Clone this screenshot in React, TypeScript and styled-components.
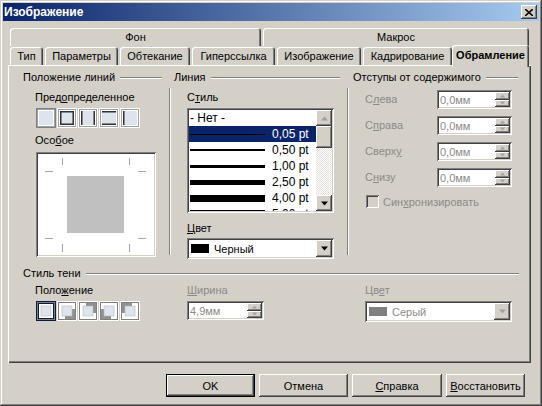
import React, { FC } from "react";
import styled, { createGlobalStyle, css } from "styled-components";

const GlobalStyle = createGlobalStyle`
	html, body {
		margin: 0;
		padding: 0;
		background: #d4d0c8;
	}
	body {
		font-family: "Liberation Sans", Arial, sans-serif;
		font-size: 11px;
		color: #000;
	}
`;

const FACE = "#d4d0c8";
const DISABLED = "#8c8a86";

const raised = css`
	background: ${FACE};
	box-shadow: inset -1px -1px #404040, inset 1px 1px #ffffff,
		inset -2px -2px #808080, inset 2px 2px ${FACE};
`;

const sunken = css`
	box-shadow: inset 1px 1px #808080, inset -1px -1px #ffffff,
		inset 2px 2px #404040, inset -2px -2px ${FACE};
`;

const Window = styled("div")`
	width: 542px;
	height: 406px;
	box-sizing: border-box;
	padding: 3px;
	background: ${FACE};
	box-shadow: inset -1px -1px #404040, inset 1px 1px ${FACE},
		inset -2px -2px #808080, inset 2px 2px #ffffff;
	display: flex;
	flex-direction: column;
`;

const TitleBar = styled("div")`
	height: 18px;
	display: flex;
	align-items: center;
	justify-content: space-between;
	padding: 0 2px 0 1px;
	background: linear-gradient(to right, #0a246a, #a6caf0);
`;

const Title = styled("span")`
	color: #fff;
	font-weight: bold;
	font-size: 12px;
`;

const CloseButton = styled("div")`
	${raised};
	width: 16px;
	height: 14px;
	display: flex;
	align-items: center;
	justify-content: center;
`;

const Body = styled("div")`
	display: flex;
	flex-direction: column;
	padding: 7px 5px 0 5px;
`;

const TabRow = styled("div")`
	display: flex;
	align-items: flex-end;
	gap: 2px;
	padding-left: 2px;
	height: ${(p: { $h: number }) => p.$h}px;
`;

const Tab = styled("div")<{ $w: number; $active?: boolean }>`
	position: relative;
	box-sizing: border-box;
	width: ${(p) => p.$w}px;
	height: 18px;
	display: flex;
	align-items: center;
	justify-content: center;
	background: ${FACE};
	border-radius: 3px 3px 0 0;
	box-shadow: inset 1px 1px #ffffff, inset -1px 0 #404040, inset -2px 0 #808080;
	white-space: nowrap;
	${(p) =>
		p.$active &&
		css`
			height: 22px;
			margin: 0 -2px -2px -2px;
			padding-bottom: 3px;
			font-weight: bold;
			z-index: 1;
		`}
`;

const Panel = styled("div")`
	box-sizing: border-box;
	width: 523px;
	height: 298px;
	padding: 6px 0 0 15px;
	background: ${FACE};
	box-shadow: inset 1px 1px #ffffff, inset -1px -1px #404040, inset -2px -2px #808080;
	display: flex;
	flex-direction: column;
`;

const TopSection = styled("div")`
	display: flex;
	height: 196px;
`;

const Group = styled("div")<{ $w: number }>`
	width: ${(p) => p.$w}px;
	display: flex;
	flex-direction: column;
`;

const GroupHeader = styled("div")`
	display: flex;
	align-items: center;
	gap: 5px;
	height: 13px;
	line-height: 13px;
	white-space: nowrap;

	&::after {
		content: "";
		flex: 1;
		height: 0;
		border-top: 1px solid #808080;
		border-bottom: 1px solid #ffffff;
	}
`;

const Indent = styled("div")<{ $left: number }>`
	padding-left: ${(p) => p.$left}px;
	display: flex;
	flex-direction: column;
`;

const VSeparator = styled("div")<{ $ml: number; $mr: number }>`
	width: 0;
	height: 167px;
	margin: 17px ${(p) => p.$mr}px 0 ${(p) => p.$ml}px;
	border-left: 1px solid #808080;
	border-right: 1px solid #ffffff;
`;

const Label = styled("div")<{ $mt?: number; $disabled?: boolean }>`
	height: 13px;
	line-height: 13px;
	margin-top: ${(p) => p.$mt ?? 0}px;
	color: ${(p) => (p.$disabled ? DISABLED : "#000")};
	white-space: nowrap;
`;

const Key = styled("span")`
	text-decoration: underline;
	text-underline-offset: 1px;
`;

const IconRow = styled("div")<{ $mt: number }>`
	display: flex;
	gap: 1px;
	margin: ${(p) => p.$mt}px 0 0 1px;
`;

const IconButton = styled("div")`
	width: 20px;
	height: 20px;
	display: flex;
`;

const Preview = styled("div")`
	${sunken};
	width: 120px;
	height: 105px;
	margin: 5px 0 0 1px;
	background: #fff;
	display: flex;
`;

const ListBox = styled("div")`
	${sunken};
	box-sizing: border-box;
	width: 147px;
	height: 105px;
	margin-top: 4px;
	padding: 2px;
	background: #fff;
	display: flex;
	overflow: hidden;
`;

const ListItems = styled("div")`
	flex: 1;
	display: flex;
	flex-direction: column;
	overflow: hidden;
`;

const ListItem = styled("div")<{ $selected?: boolean }>`
	flex: none;
	height: 16px;
	display: flex;
	align-items: center;
	padding-left: 1px;
	background: ${(p) => (p.$selected ? "#0a246a" : "transparent")};
	color: ${(p) => (p.$selected ? "#fff" : "#000")};
	font-size: 12px;
	white-space: nowrap;
`;

const LineSample = styled("div")`
	width: 75px;
	background: #000;
	margin-right: 7px;
`;

const ScrollBar = styled("div")`
	width: 16px;
	display: flex;
	flex-direction: column;
	background: repeating-conic-gradient(#ffffff 0 25%, #e4e1dc 0 50%) 0 0 / 2px 2px;
`;

const ScrollButton = styled("div")<{ $h?: number }>`
	${raised};
	width: 16px;
	height: ${(p) => p.$h ?? 16}px;
	display: flex;
	align-items: center;
	justify-content: center;
	flex: none;
`;

const Track = styled("div")`
	flex: 1;
`;

const Combo = styled("div")<{ $w: number; $mt?: number; $disabled?: boolean }>`
	${sunken};
	box-sizing: border-box;
	width: ${(p) => p.$w}px;
	height: 21px;
	margin-top: ${(p) => p.$mt ?? 0}px;
	padding: 2px;
	background: #fff;
	display: flex;
	align-items: center;
	color: ${(p) => (p.$disabled ? DISABLED : "#000")};
`;

const Swatch = styled("div")<{ $color: string }>`
	width: 18px;
	height: 9px;
	margin: 0 5px 0 2px;
	background: ${(p) => p.$color};
`;

const ComboText = styled("span")`
	flex: 1;
`;

const SpinRow = styled("div")<{ $mt: number }>`
	display: flex;
	align-items: center;
	margin-top: ${(p) => p.$mt}px;
	height: 19px;
`;

const SpinLabel = styled(Label)`
	width: 72px;
`;

const SpinField = styled("div")<{ $w: number }>`
	${sunken};
	box-sizing: border-box;
	width: ${(p) => p.$w}px;
	height: 19px;
	padding: 2px;
	background: #fff;
	display: flex;
	align-items: center;
	color: ${DISABLED};
`;

const SpinText = styled("span")`
	flex: 1;
	padding-left: 1px;
`;

const SpinButtons = styled("div")`
	display: flex;
	flex-direction: column;
	height: 15px;
`;

const SpinButton = styled("div")`
	${raised};
	width: 15px;
	height: 7.5px;
	display: flex;
	align-items: center;
	justify-content: center;
`;

const CheckRow = styled("div")`
	display: flex;
	align-items: center;
	gap: 4px;
	margin: 8px 0 0 1px;
	color: ${DISABLED};
`;

const CheckBox = styled("div")`
	${sunken};
	width: 13px;
	height: 13px;
	background: ${FACE};
`;

const ShadowSection = styled("div")`
	display: flex;
	flex-direction: column;
	width: 496px;
`;

const ShadowGrid = styled("div")`
	display: grid;
	grid-template-columns: 152px 178px 147px;
	grid-template-rows: 13px 20px;
	row-gap: 4px;
	margin-top: 4px;
`;

const Footer = styled("div")`
	display: flex;
	justify-content: flex-end;
	gap: 4px;
	margin-top: 11px;
	padding-right: 9px;
`;

const PushButton = styled("div")<{ $w: number; $default?: boolean }>`
	${raised};
	box-sizing: border-box;
	width: ${(p) => p.$w}px;
	height: 23px;
	display: flex;
	align-items: center;
	justify-content: center;
	${(p) =>
		p.$default &&
		css`
			box-shadow: inset 0 0 0 1px #000, inset -2px -2px #404040,
				inset 2px 2px #ffffff, inset -3px -3px #808080;
		`}
`;

const Arrow: FC<{ down?: boolean; color?: string; size?: number }> = ({
	down,
	color = "#000",
	size = 7,
}) => (
	<svg width={size} height={Math.ceil(size / 2) + 1} viewBox="0 0 7 4">
		<polygon
			points={down ? "0,0 7,0 3.5,4" : "0,4 7,4 3.5,0"}
			fill={color}
		/>
	</svg>
);

type Side = "t" | "r" | "b" | "l";

const BorderPreset: FC<{ sides: Side[]; focused?: boolean }> = ({ sides, focused }) => (
	<svg width="20" height="20" viewBox="0 0 20 20">
		<rect x="0.5" y="0.5" width="19" height="19" fill="#fff" stroke="#fff" />
		<rect x="1.5" y="1.5" width="17" height="17" fill="none" stroke="#a0a0a0" />
		<rect x="3" y="3" width="14" height="14" fill="#dde4ee" />
		{sides.includes("t") && <rect x="3" y="3" width="14" height="1.5" fill="#303030" />}
		{sides.includes("b") && <rect x="3" y="15.5" width="14" height="1.5" fill="#303030" />}
		{sides.includes("l") && <rect x="3" y="3" width="1.5" height="14" fill="#303030" />}
		{sides.includes("r") && <rect x="15.5" y="3" width="1.5" height="14" fill="#303030" />}
		{focused && (
			<rect
				x="0.5"
				y="0.5"
				width="19"
				height="19"
				fill="none"
				stroke="#000"
				strokeDasharray="1 1"
			/>
		)}
	</svg>
);

const ShadowPreset: FC<{ dx: number; dy: number; selected?: boolean }> = ({
	dx,
	dy,
	selected,
}) => (
	<svg width="20" height="20" viewBox="0 0 20 20">
		<rect x="0.5" y="0.5" width="19" height="19" fill="#fff" stroke="#fff" />
		<rect x="1.5" y="1.5" width="17" height="17" fill="none" stroke="#808080" />
		{(dx !== 0 || dy !== 0) && (
			<rect x={5 + dx} y={5 + dy} width="10" height="10" fill="#909090" />
		)}
		<rect x="5" y="5" width="10" height="10" fill="#dde4ee" stroke="#b8b8b8" strokeWidth="0.6" />
		{selected && (
			<>
				<rect x="0.5" y="0.5" width="19" height="19" fill="none" stroke="#0a1a40" />
				<rect x="2.5" y="2.5" width="15" height="15" fill="none" stroke="#0a1a40" />
			</>
		)}
	</svg>
);

const PreviewDrawing: FC = () => (
	<svg width="120" height="105" viewBox="0 0 120 105">
		<rect x="31" y="24" width="57" height="57" fill="#c0c0c0" />
		<g stroke="#a8a8a8" strokeWidth="1">
			<line x1="26.5" y1="6" x2="26.5" y2="13" />
			<line x1="93.5" y1="6" x2="93.5" y2="13" />
			<line x1="26.5" y1="92" x2="26.5" y2="100" />
			<line x1="93.5" y1="92" x2="93.5" y2="100" />
			<line x1="9" y1="19.5" x2="17" y2="19.5" />
			<line x1="102" y1="19.5" x2="110" y2="19.5" />
			<line x1="9" y1="86.5" x2="17" y2="86.5" />
			<line x1="102" y1="86.5" x2="110" y2="86.5" />
		</g>
	</svg>
);

const lineStyles = [
	{ label: "0,05 pt", h: 1 },
	{ label: "0,50 pt", h: 1.5 },
	{ label: "1,00 pt", h: 3 },
	{ label: "2,50 pt", h: 5 },
	{ label: "4,00 pt", h: 7 },
	{ label: "5,00 pt", h: 8 },
];

const spacing = [
	{ pre: "С", key: "л", post: "ева" },
	{ pre: "С", key: "п", post: "рава" },
	{ pre: "Сверх", key: "у", post: "" },
	{ pre: "С", key: "н", post: "изу" },
];

const Spin: FC<{ value: string; w: number }> = ({ value, w }) => (
	<SpinField $w={w}>
		<SpinText>{value}</SpinText>
		<SpinButtons>
			<SpinButton>
				<Arrow size={5} color="#a0a0a0" />
			</SpinButton>
			<SpinButton>
				<Arrow size={5} color="#a0a0a0" down />
			</SpinButton>
		</SpinButtons>
	</SpinField>
);

export default function App() {
	return (
		<>
			<GlobalStyle />
			<Window>
				<TitleBar>
					<Title>Изображение</Title>
					<CloseButton>
						<svg width="8" height="7" viewBox="0 0 8 7">
							<path d="M0 0 L8 7 M8 0 L0 7" stroke="#000" strokeWidth="1.6" />
						</svg>
					</CloseButton>
				</TitleBar>
				<Body>
					<TabRow $h={18}>
						<Tab $w={251}>Фон</Tab>
						<Tab $w={266}>Макрос</Tab>
					</TabRow>
					<TabRow $h={19}>
						<Tab $w={33}>Тип</Tab>
						<Tab $w={73}>Параметры</Tab>
						<Tab $w={70}>Обтекание</Tab>
						<Tab $w={83}>Гиперссылка</Tab>
						<Tab $w={84}>Изображение</Tab>
						<Tab $w={89}>Кадрирование</Tab>
						<Tab $w={77} $active>
							Обрамление
						</Tab>
					</TabRow>
					<Panel>
						<TopSection>
							<Group $w={139}>
								<GroupHeader>Положение линий</GroupHeader>
								<Indent $left={12}>
									<Label $mt={7}>
										Пред<Key>о</Key>пределенное
									</Label>
									<IconRow $mt={4}>
										<IconButton>
											<BorderPreset sides={[]} focused />
										</IconButton>
										<IconButton>
											<BorderPreset sides={["t", "r", "b", "l"]} />
										</IconButton>
										<IconButton>
											<BorderPreset sides={["l", "r"]} />
										</IconButton>
										<IconButton>
											<BorderPreset sides={["t", "b"]} />
										</IconButton>
										<IconButton>
											<BorderPreset sides={["l"]} />
										</IconButton>
									</IconRow>
									<Label $mt={6}>
										Осо<Key>б</Key>ое
									</Label>
									<Preview>
										<PreviewDrawing />
									</Preview>
								</Indent>
							</Group>
							<VSeparator $ml={7} $mr={3} />
							<Group $w={166}>
								<GroupHeader>Линия</GroupHeader>
								<Indent $left={13}>
									<Label $mt={7}>
										С<Key>т</Key>иль
									</Label>
									<ListBox>
										<ListItems>
											<ListItem>- Нет -</ListItem>
											{lineStyles.map((s, i) => (
												<ListItem key={s.label} $selected={i === 0}>
													<LineSample style={{ height: s.h }} />
													{s.label}
												</ListItem>
											))}
										</ListItems>
										<ScrollBar>
											<ScrollButton>
												<Arrow color="#a0a0a0" />
											</ScrollButton>
											<ScrollButton $h={22} />
											<Track />
											<ScrollButton>
												<Arrow down />
											</ScrollButton>
										</ScrollBar>
									</ListBox>
									<Label $mt={9}>
										<Key>Ц</Key>вет
									</Label>
									<Combo $w={147} $mt={3}>
										<Swatch $color="#000" />
										<ComboText>Черный</ComboText>
										<ScrollButton $h={17}>
											<Arrow down />
										</ScrollButton>
									</Combo>
								</Indent>
							</Group>
							<VSeparator $ml={7} $mr={4} />
							<Group $w={165}>
								<GroupHeader>Отступы от содержимого</GroupHeader>
								<Indent $left={12}>
									{spacing.map((s, i) => (
										<SpinRow key={s.pre + s.key} $mt={i === 0 ? 6 : 7}>
											<SpinLabel $disabled>
												{s.pre}
												<Key>{s.key}</Key>
												{s.post}
											</SpinLabel>
											<Spin value="0,0мм" w={75} />
										</SpinRow>
									))}
									<CheckRow>
										<CheckBox />
										<span>
											Син<Key>х</Key>ронизировать
										</span>
									</CheckRow>
								</Indent>
							</Group>
						</TopSection>
						<ShadowSection>
							<GroupHeader>Стиль тени</GroupHeader>
							<Indent $left={12}>
								<ShadowGrid>
									<Label>
										Поло<Key>ж</Key>ение
									</Label>
									<Label $disabled>
										<Key>Ш</Key>ирина
									</Label>
									<Label $disabled>
										Цв<Key>е</Key>т
									</Label>
									<IconRow $mt={0}>
										<IconButton>
											<ShadowPreset dx={0} dy={0} selected />
										</IconButton>
										<IconButton>
											<ShadowPreset dx={3} dy={3} />
										</IconButton>
										<IconButton>
											<ShadowPreset dx={3} dy={-3} />
										</IconButton>
										<IconButton>
											<ShadowPreset dx={-3} dy={3} />
										</IconButton>
										<IconButton>
											<ShadowPreset dx={-3} dy={-3} />
										</IconButton>
									</IconRow>
									<Spin value="4,9мм" w={77} />
									<Combo $w={147} $disabled>
										<Swatch $color="#808080" />
										<ComboText>Серый</ComboText>
										<ScrollButton $h={17}>
											<Arrow down color="#a0a0a0" />
										</ScrollButton>
									</Combo>
								</ShadowGrid>
							</Indent>
						</ShadowSection>
					</Panel>
					<Footer>
						<PushButton $w={89} $default>
							OK
						</PushButton>
						<PushButton $w={89}>Отмена</PushButton>
						<PushButton $w={90}>
							<Key>С</Key>правка
						</PushButton>
						<PushButton $w={79}>
							<Key>В</Key>осстановить
						</PushButton>
					</Footer>
				</Body>
			</Window>
		</>
	);
}
